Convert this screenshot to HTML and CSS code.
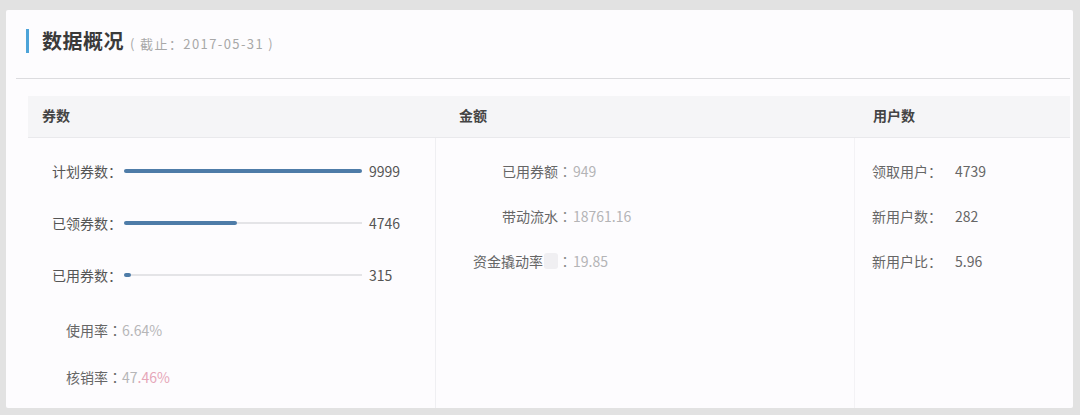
FILE: index.html
```html
<!DOCTYPE html>
<html lang="zh-CN">
<head>
<meta charset="utf-8">
<title>数据概况</title>
<link rel="stylesheet" href="styles.css">
</head>
<body>
<div class="card">
  <div class="card-head">
    <span class="accent"></span>
    <h1 class="title">数据概况</h1>
    <span class="subtitle">( 截止<span class="c">：</span>2017-05-31 )</span>
  </div>
  <div class="panel">
    <div class="panel-head">
      <div class="ph col1">券数</div>
      <div class="ph col2">金额</div>
      <div class="ph col3">用户数</div>
    </div>
    <div class="panel-body">
      <div class="col col1">
        <div class="bar-row">
          <span class="bar-label">计划券数<span class="c">：</span></span>
          <span class="track"><span class="fill" style="width:100%"></span></span>
          <span class="bar-val">9999</span>
        </div>
        <div class="bar-row">
          <span class="bar-label">已领券数<span class="c">：</span></span>
          <span class="track"><span class="fill" style="width:47.46%"></span></span>
          <span class="bar-val">4746</span>
        </div>
        <div class="bar-row">
          <span class="bar-label">已用券数<span class="c">：</span></span>
          <span class="track"><span class="fill" style="width:3.15%"></span></span>
          <span class="bar-val">315</span>
        </div>
        <div class="stat first">使用率<span class="c">：</span><span class="light">6.64%</span></div>
        <div class="stat">核销率<span class="c">：</span><span class="light">47</span><span class="pink">.46%</span></div>
      </div>
      <div class="col col2">
        <div class="kv"><span class="k">已用券额</span><span class="sep c">：</span><span class="v">949</span></div>
        <div class="kv"><span class="k">带动流水</span><span class="sep c">：</span><span class="v">18761.16</span></div>
        <div class="kv"><span class="k">资金撬动率<span class="blank"></span></span><span class="sep c">：</span><span class="v">19.85</span></div>
      </div>
      <div class="col col3">
        <div class="kv3"><span class="k3">领取用户<span class="c">：</span></span><span class="v3">4739</span></div>
        <div class="kv3"><span class="k3">新用户数<span class="c">：</span></span><span class="v3">282</span></div>
        <div class="kv3"><span class="k3">新用户比<span class="c">：</span></span><span class="v3">5.96</span></div>
      </div>
    </div>
  </div>
</div>
</body>
</html>
```

FILE: styles.css
```css
* { box-sizing: border-box; }
html, body { margin: 0; padding: 0; }
body {
  background: #e2e2e2;
  width: 1080px;
  height: 415px;
  padding: 10px 7px 7px 6px;
  font-family: "Noto Sans CJK SC", "Noto Sans", "Liberation Sans", sans-serif;
  color: #555;
  overflow: hidden;
}
.c { font-family: "Noto Sans CJK TC", "Noto Sans CJK SC", sans-serif; }
.card {
  background: #fdfcfe;
  height: 398px;
  border-radius: 2px;
  display: flex;
  flex-direction: column;
}
.card-head {
  margin: 0 3px 0 10px;
  height: 69px;
  border-bottom: 1px solid #dcdcdf;
  display: flex;
  align-items: center;
  padding-left: 10px;
  padding-bottom: 6px;
}
.accent {
  width: 3px;
  height: 24px;
  background: #4da4d9;
  margin-right: 13px;
}
.title {
  margin: 0;
  font-size: 20px;
  font-weight: 700;
  color: #3a3a3a;
  letter-spacing: 0.5px;
  line-height: 24px;
}
.subtitle {
  margin-left: 6px;
  font-size: 13px;
  color: #a8a8a8;
  padding-top: 4px;
  letter-spacing: 1.4px;
  white-space: pre;
}
.panel {
  margin: 17px 3px 0 22px;
  flex: 1;
  display: flex;
  flex-direction: column;
}
.panel-head {
  height: 42px;
  background: #f5f5f7;
  border-bottom: 1px solid #e9e9ec;
  display: flex;
  align-items: center;
  padding-bottom: 3px;
}
.ph {
  font-size: 14px;
  font-weight: 700;
  color: #444;
}
.panel-head .col1 { width: 408px; padding-left: 14px; }
.panel-head .col2 { width: 419px; padding-left: 23px; }
.panel-head .col3 { flex: 1; padding-left: 18px; }
.panel-body {
  flex: 1;
  display: flex;
}
.col { font-size: 14px; }
.panel-body .col1 {
  width: 408px;
  border-right: 1px solid #efeff2;
  padding: 7px 0 0 24px;
}
.panel-body .col2 {
  width: 419px;
  border-right: 1px solid #f3f2f5;
  padding: 10px 0 0 28px;
}
.panel-body .col3 {
  flex: 1;
  padding: 10px 0 0 17px;
}
.bar-row {
  height: 52px;
  display: flex;
  align-items: center;
}
.bar-label { width: 72px; color: #555; white-space: nowrap; }
.track {
  width: 238px;
  height: 2px;
  background: #e4e4e7;
  display: flex;
  align-items: center;
}
.fill {
  display: block;
  height: 4px;
  min-width: 7px;
  background: #4e7ca8;
  border-radius: 2px;
}
.bar-val { margin-left: 7px; color: #555; }
.stat {
  height: 47px;
  display: flex;
  align-items: center;
  padding-left: 14px;
  color: #666;
}
.stat.first { margin-top: 5px; }
.light { color: #b6b6b8; }
.pink { color: #e6a6b8; }
.kv {
  height: 45px;
  display: flex;
  align-items: center;
}
.k {
  width: 94px;
  text-align: right;
  color: #666;
  white-space: nowrap;
  display: inline-flex;
  justify-content: flex-end;
  align-items: center;
}
.blank {
  display: inline-block;
  width: 14px;
  height: 16px;
  background: #f0eff2;
  border-radius: 3px;
  margin-left: 1px;
}
.sep { color: #888; width: 14px; }
.v { color: #b4b4b6; margin-left: 1px; }
.kv3 {
  height: 45px;
  display: flex;
  align-items: center;
}
.k3 { width: 83px; color: #666; white-space: nowrap; }
.v3 { color: #666; }
```
